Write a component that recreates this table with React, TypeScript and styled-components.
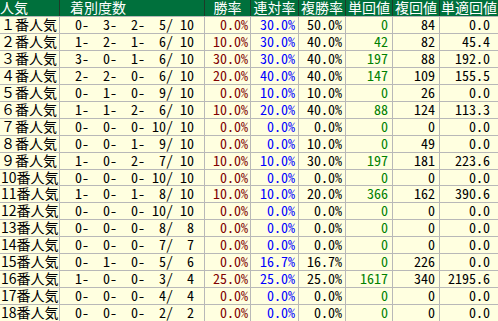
import styled, { createGlobalStyle } from 'styled-components';

const GlobalStyle = createGlobalStyle`
  html, body {
    margin: 0;
    padding: 0;
    background: #ffffff;
  }
  body {
    font-family: "Noto Sans CJK JP", "DejaVu Sans", sans-serif;
  }
`;

const COLS = '59px 144px 45px 47px 46px 46px 46px 59px';

const Sheet = styled.div`
  width: 498px;
  height: 321px;
  overflow: hidden;
  display: flex;
  flex-direction: column;
  gap: 1px;
  background: #b8b8b8;
`;

const HeadRow = styled.div`
  display: grid;
  grid-template-columns: ${COLS};
  column-gap: 1px;
  height: 16px;
  background: #1f3a28;
`;

const HeadCell = styled.div<{ $align?: 'left' | 'center'; $pad?: number }>`
  background: #00703c;
  color: #ffffff;
  font-size: 14px;
  line-height: 15px;
  white-space: nowrap;
  text-align: ${p => p.$align || 'center'};
  padding-left: ${p => p.$pad || 0}px;
`;

const Row = styled.div`
  display: grid;
  grid-template-columns: ${COLS};
  column-gap: 1px;
  height: 16px;
`;

const Cell = styled.div<{ $color?: string; $pad?: number; $align?: 'left' | 'right' }>`
  background: #ffffe0;
  color: ${p => p.$color || '#000000'};
  font-size: 14px;
  line-height: 15px;
  white-space: nowrap;
  font-feature-settings: ${p => (p.$align === 'left' ? 'normal' : '"hwid" 1')};
  text-align: ${p => p.$align || 'right'};
  padding-right: ${p => (p.$align === 'left' ? 0 : p.$pad ?? 3)}px;
  padding-left: ${p => (p.$align === 'left' ? 1 : 0)}px;
`;

const Record = styled(Cell)`
  display: flex;
  justify-content: flex-end;
  padding-right: 10px;
`;

const Part = styled.span<{ $w: number }>`
  display: inline-block;
  width: ${p => p.$w}px;
  text-align: right;
`;

type Line = [number, number, number, number, number, string, string, string, number, number, string];

const rows: Line[] = [
  [0, 3, 2, 5, 10, '0.0%', '30.0%', '50.0%', 0, 84, '0.0'],
  [1, 2, 1, 6, 10, '10.0%', '30.0%', '40.0%', 42, 82, '45.4'],
  [3, 0, 1, 6, 10, '30.0%', '30.0%', '40.0%', 197, 88, '192.0'],
  [2, 2, 0, 6, 10, '20.0%', '40.0%', '40.0%', 147, 109, '155.5'],
  [0, 1, 0, 9, 10, '0.0%', '10.0%', '10.0%', 0, 26, '0.0'],
  [1, 1, 2, 6, 10, '10.0%', '20.0%', '40.0%', 88, 124, '113.3'],
  [0, 0, 0, 10, 10, '0.0%', '0.0%', '0.0%', 0, 0, '0.0'],
  [0, 0, 1, 9, 10, '0.0%', '0.0%', '10.0%', 0, 49, '0.0'],
  [1, 0, 2, 7, 10, '10.0%', '10.0%', '30.0%', 197, 181, '223.6'],
  [0, 0, 0, 10, 10, '0.0%', '0.0%', '0.0%', 0, 0, '0.0'],
  [1, 0, 1, 8, 10, '10.0%', '10.0%', '20.0%', 366, 162, '390.6'],
  [0, 0, 0, 10, 10, '0.0%', '0.0%', '0.0%', 0, 0, '0.0'],
  [0, 0, 0, 8, 8, '0.0%', '0.0%', '0.0%', 0, 0, '0.0'],
  [0, 0, 0, 7, 7, '0.0%', '0.0%', '0.0%', 0, 0, '0.0'],
  [0, 1, 0, 5, 6, '0.0%', '16.7%', '16.7%', 0, 226, '0.0'],
  [1, 0, 0, 3, 4, '25.0%', '25.0%', '25.0%', 1617, 340, '2195.6'],
  [0, 0, 0, 4, 4, '0.0%', '0.0%', '0.0%', 0, 0, '0.0'],
  [0, 0, 0, 2, 2, '0.0%', '0.0%', '0.0%', 0, 0, '0.0'],
];

const wide = '０１２３４５６７８９';
const rankLabel = (n: number) => (n < 10 ? wide[n] : String(n)) + '番人気';

export default function App() {
  return (
    <>
      <GlobalStyle />
      <Sheet>
        <HeadRow>
          <HeadCell $align="left">人気</HeadCell>
          <HeadCell $align="left" $pad={10}>着別度数</HeadCell>
          <HeadCell>勝率</HeadCell>
          <HeadCell>連対率</HeadCell>
          <HeadCell>複勝率</HeadCell>
          <HeadCell>単回値</HeadCell>
          <HeadCell>複回値</HeadCell>
          <HeadCell $align="left" $pad={1}>単適回値</HeadCell>
        </HeadRow>
        {rows.map((r, i) => (
          <Row key={i}>
            <Cell $align="left">{rankLabel(i + 1)}</Cell>
            <Record>
              <Part $w={28}>{r[0]}-</Part>
              <Part $w={28}>{r[1]}-</Part>
              <Part $w={28}>{r[2]}-</Part>
              <Part $w={28}>{r[3]}/</Part>
              <Part $w={21}>{r[4]}</Part>
            </Record>
            <Cell $color="#800000" $pad={2}>{r[5]}</Cell>
            <Cell $color="#0000ff" $pad={3}>{r[6]}</Cell>
            <Cell $pad={3}>{r[7]}</Cell>
            <Cell $color="#008000" $pad={4}>{r[8]}</Cell>
            <Cell $pad={4}>{r[9]}</Cell>
            <Cell $pad={9}>{r[10]}</Cell>
          </Row>
        ))}
      </Sheet>
    </>
  );
}
